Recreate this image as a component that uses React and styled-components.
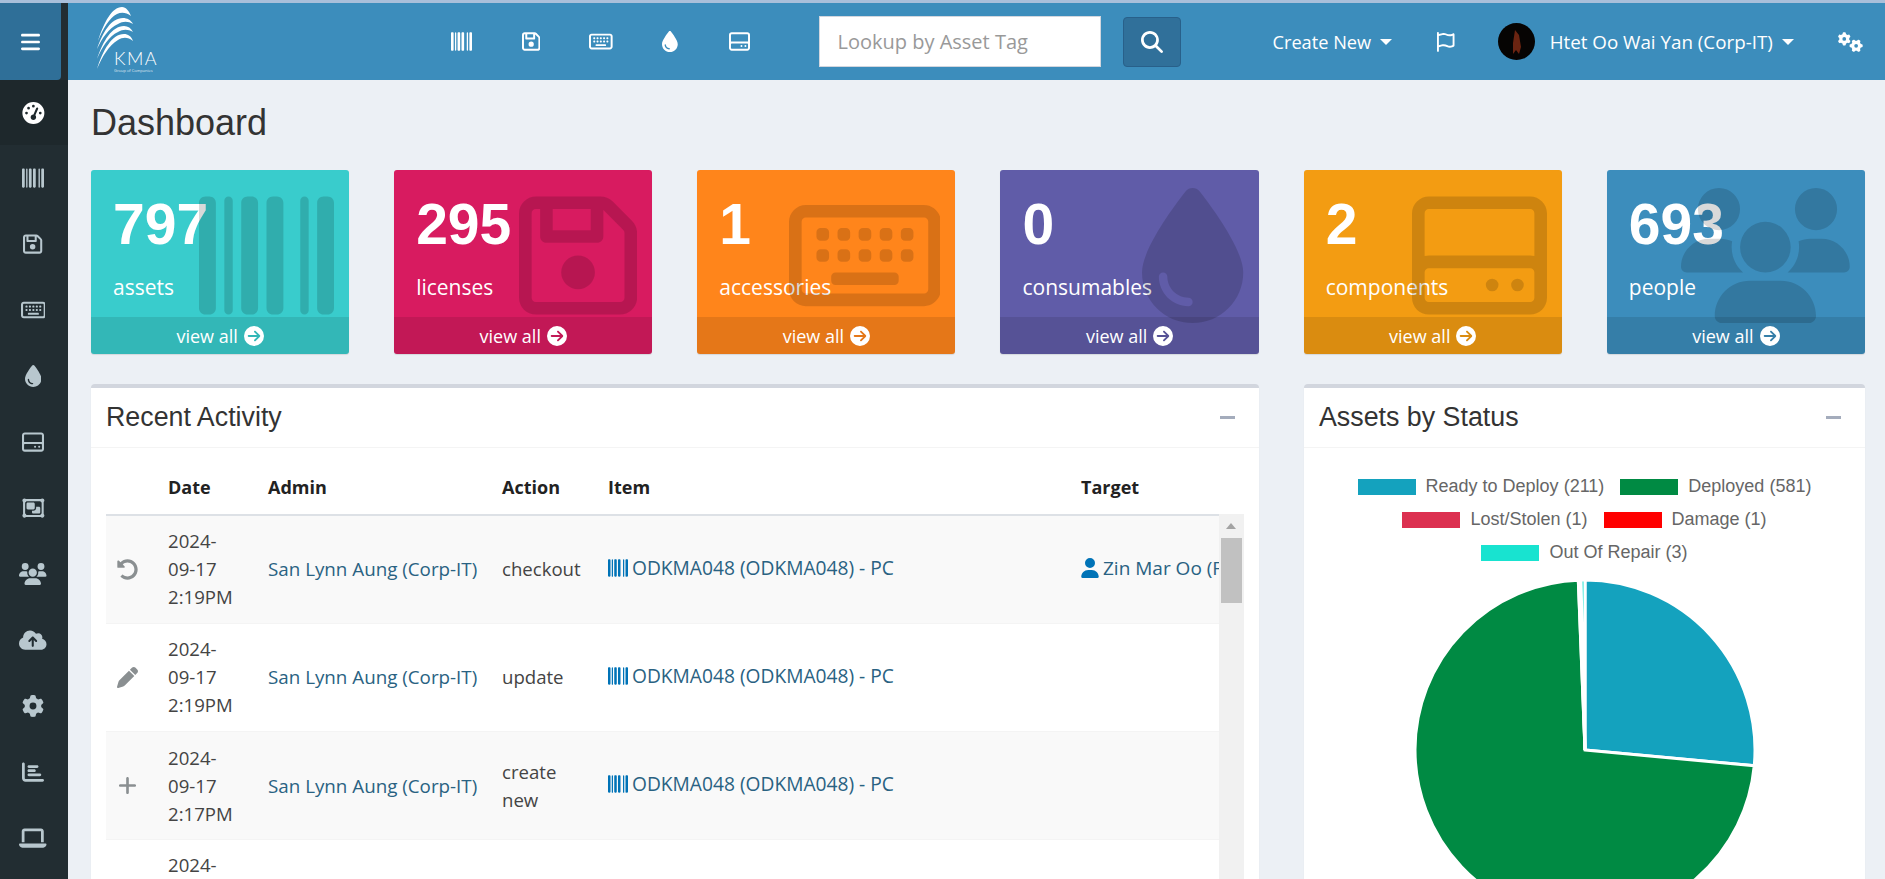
import React from 'react'
import styled, { createGlobalStyle } from 'styled-components'
import { FaUndoAlt } from 'react-icons/fa'
import {
  FaBars, FaBarcode, FaRegFloppyDisk, FaRegKeyboard, FaDroplet, FaRegHardDrive, FaGaugeHigh,
  FaRegObjectGroup, FaUsers, FaCloudArrowUp, FaGear, FaChartBar, FaLaptop, FaMagnifyingGlass,
  FaRegFlag, FaGears, FaCircleArrowRight, FaPen, FaPlus, FaUser,
} from 'react-icons/fa6'

const GlobalStyle = createGlobalStyle`
  html, body { margin: 0; padding: 0; height: 100%; overflow: hidden; }
  body { background: #ecf0f5; font-family: "Open Sans", "Noto Sans", sans-serif; color: #444; }
  * { box-sizing: border-box; }
`

const Page = styled.div`
  height: 879px;
  overflow: hidden;
`

const TopStrip = styled.div`
  height: 3px;
  background: #a9bfda;
`

const Shell = styled.div`
  display: flex;
`

const Sidebar = styled.aside`
  width: 68px;
  flex: none;
  height: 876px;
  background: #222d32;
`

const Toggle = styled.div`
  width: 61px;
  height: 77px;
  background: #2f6f98;
  border-radius: 0 0 4px 0;
  color: #fff;
  display: flex;
  align-items: center;
  justify-content: center;
  svg { height: 22px; width: 19px; display: block; }
`

const SideItem = styled.div`
  height: ${({ $active }) => ($active ? 65 : 66)}px;
  background: ${({ $active }) => ($active ? '#1e282c' : 'transparent')};
  color: ${({ $active }) => ($active ? '#fff' : '#b8c7ce')};
  display: flex;
  align-items: center;
  justify-content: center;
  padding-right: 2px;
  svg { height: 22px; width: ${({ $ratio }) => $ratio * 22}px; display: block; }
`

const Main = styled.main`
  flex: 1;
  min-width: 0;
`

const Header = styled.header`
  height: 77px;
  background: #3c8dbc;
  display: flex;
  align-items: center;
  color: #fff;
`

const Logo = styled.div`
  width: 64px;
  height: 70px;
  margin: 0 0 0 28px;
  position: relative;
  flex: none;
  align-self: flex-start;
  svg { display: block; }
`

const LogoName = styled.div`
  position: absolute;
  left: 18px;
  top: 46px;
  font-family: "Lato", sans-serif;
  font-weight: 300;
  font-size: 18px;
  letter-spacing: 1.5px;
  line-height: 18px;
`

const LogoTag = styled.div`
  position: absolute;
  left: 18px;
  top: 64.5px;
  font-size: 4px;
  line-height: 5px;
  white-space: nowrap;
  opacity: .8;
`

const NavIcons = styled.nav`
  display: flex;
  margin-left: 267px;
`

const NavIcon = styled.div`
  width: 69.5px;
  display: flex;
  justify-content: center;
  svg { height: 21px; width: ${({ $ratio }) => $ratio * 21}px; display: block; }
`

const SearchInput = styled.input`
  width: 282px;
  height: 51px;
  margin-left: 44px;
  padding: 0 18px;
  border: 1px solid #d2d6de;
  background: #fff;
  font: 20px "Open Sans", sans-serif;
  outline: none;
  &::placeholder { color: #999; opacity: 1; }
`

const SearchButton = styled.button`
  width: 58px;
  height: 50px;
  margin-left: 22px;
  border: 1px solid #28608a;
  border-radius: 4px;
  background: #30709a;
  color: #fff;
  display: flex;
  align-items: center;
  justify-content: center;
  svg { height: 22px; width: 22px; display: block; }
`

const HeaderLink = styled.div`
  display: flex;
  align-items: center;
  font-size: ${({ $size }) => $size}px;
  white-space: nowrap;
  margin-left: ${({ $gap }) => $gap}px;
`

const Caret = styled.span`
  width: 0;
  height: 0;
  margin-left: 9px;
  border-left: 6px solid transparent;
  border-right: 6px solid transparent;
  border-top: 6px solid #fff;
`

const HeaderIcon = styled.div`
  margin-left: ${({ $gap }) => $gap}px;
  svg { height: 20px; width: ${({ $ratio }) => $ratio * 20}px; display: block; }
`

const Avatar = styled.svg`
  width: 37px;
  height: 37px;
  margin-left: 43px;
  flex: none;
  display: block;
`

const Content = styled.div`
  padding: 0 20px 0 23px;
`

const Title = styled.h1`
  margin: 0;
  height: 90px;
  font: 400 36px/86px "Liberation Sans", Arial, sans-serif;
  color: #333;
`

const Cards = styled.div`
  display: grid;
  grid-template-columns: repeat(6, 1fr);
  column-gap: 45px;
`

const Card = styled.div`
  position: relative;
  height: 184px;
  border-radius: 3px;
  overflow: hidden;
  background: ${({ $color }) => $color};
  box-shadow: 0 1px 1px rgba(0, 0, 0, .1);
  color: #fff;
  display: flex;
  flex-direction: column;
`

const CardBody = styled.div`
  flex: 1;
  padding: 0 22px;
`

const Count = styled.div`
  font: 700 57px/56px "Liberation Sans", Arial, sans-serif;
  margin-top: 26px;
`

const CardLabel = styled.div`
  font-size: 21px;
  line-height: 28px;
  margin-top: 21px;
`

const CardFooter = styled.div`
  height: 37px;
  background: rgba(0, 0, 0, .1);
  display: flex;
  align-items: center;
  justify-content: center;
  gap: 6px;
  font-size: 18px;
  svg { height: 20px; width: 20px; display: block; }
`

const CardIcon = styled.div`
  position: absolute;
  top: 18px;
  right: 15px;
  color: rgba(0, 0, 0, .15);
  svg { height: 135px; width: ${({ $ratio }) => $ratio * 135}px; display: block; }
`

const Panels = styled.div`
  display: grid;
  grid-template-columns: 1168px 561px;
  column-gap: 45px;
  margin-top: 30px;
`

const Panel = styled.section`
  height: 520px;
  background: #fff;
  border-top: 4px solid #d2d6de;
  border-radius: 4px 4px 0 0;
  box-shadow: 0 1px 1px rgba(0, 0, 0, .1);
`

const PanelHead = styled.div`
  height: 60px;
  padding: 0 15px 1px;
  border-bottom: 1px solid #f4f4f4;
  display: flex;
  align-items: center;
  justify-content: space-between;
`

const PanelTitle = styled.h3`
  margin: 0;
  font: 400 26.8px/1 "Liberation Sans", Arial, sans-serif;
  color: #333;
`

const Collapse = styled.span`
  width: 15px;
  height: 3px;
  margin-right: 9px;
  background: #a4acbc;
`

const TableArea = styled.div`
  display: flex;
  padding: 15px 15px 0;
`

const Table = styled.table`
  width: 1113px;
  flex: none;
  table-layout: fixed;
  border-collapse: collapse;
  font-size: 18.6px;
  line-height: 28px;
  color: #444;
  align-self: flex-start;
`

const Head = styled.th`
  width: ${({ $w }) => $w}px;
  height: 52px;
  padding: 0 8px 3px;
  text-align: left;
  font-weight: 700;
  font-size: 18px;
  color: #222;
  border-bottom: 2px solid #dde1e6;
`

const Row = styled.tr`
  height: 108.3px;
  background: ${({ $odd }) => ($odd ? '#f9f9f9' : '#fff')};
  border-bottom: 1px solid #f4f4f4;
`

const Cell = styled.td`
  padding: 11px 8px;
  vertical-align: ${({ $top }) => ($top ? 'top' : 'middle')};
  overflow: hidden;
  white-space: ${({ $nowrap }) => ($nowrap ? 'nowrap' : 'normal')};
`

const ActionIcon = styled.div`
  color: #8a8f91;
  padding-left: 3px;
  svg { height: 21px; width: 21px; display: block; }
`

const DateText = styled.div`
  width: 68px;
`

const ActionText = styled.div`
  width: 84px;
`

const Link = styled.a`
  color: #296282;
  display: inline-flex;
  align-items: center;
  font-size: ${({ $size }) => $size || 19}px;
`

const LinkIcon = styled.span`
  color: #0073b7;
  margin-right: 4px;
  svg { height: 20px; width: ${({ $width }) => $width}px; display: block; }
`

const Scrollbar = styled.div`
  width: 25px;
  height: 400px;
  margin-top: 51px;
  padding-left: 2px;
  background: #f1f1f1;
  flex: none;
`

const ScrollArrow = styled.div`
  width: 0;
  height: 0;
  margin: 9px 0 0 5px;
  border-left: 5px solid transparent;
  border-right: 5px solid transparent;
  border-bottom: 6px solid #a3a3a3;
`

const ScrollThumb = styled.div`
  width: 21px;
  height: 65px;
  margin-top: 9px;
  background: #c1c1c1;
`

const Legend = styled.ul`
  list-style: none;
  width: 520px;
  margin: 22px auto 0;
  padding: 0;
  display: flex;
  flex-wrap: wrap;
  justify-content: center;
  column-gap: 16px;
  font: 18px/33px "Liberation Sans", Arial, sans-serif;
  color: #666;
`

const LegendItem = styled.li`
  display: flex;
  align-items: center;
  gap: 10px;
`

const Swatch = styled.span`
  width: 58px;
  height: 16px;
  background: ${({ $color }) => $color};
`

const Pie = styled.svg`
  display: block;
  margin: 10px auto 0;
`

const navItems = [
  { Icon: FaBarcode, ratio: 1 },
  { Icon: FaRegFloppyDisk, ratio: 0.875 },
  { Icon: FaRegKeyboard, ratio: 1.125 },
  { Icon: FaDroplet, ratio: 0.75 },
  { Icon: FaRegHardDrive, ratio: 1 },
]

const sideItems = [
  ...navItems,
  { Icon: FaRegObjectGroup, ratio: 1.125 },
  { Icon: FaUsers, ratio: 1.25 },
  { Icon: FaCloudArrowUp, ratio: 1.25 },
  { Icon: FaGear, ratio: 1 },
  { Icon: FaChartBar, ratio: 1 },
  { Icon: FaLaptop, ratio: 1.25 },
]

const cards = [
  { count: 797, label: 'assets', color: '#39cccc', Icon: FaBarcode, ratio: 1 },
  { count: 295, label: 'licenses', color: '#d81b60', Icon: FaRegFloppyDisk, ratio: 0.875 },
  { count: 1, label: 'accessories', color: '#ff851b', Icon: FaRegKeyboard, ratio: 1.125 },
  { count: 0, label: 'consumables', color: '#605ca8', Icon: FaDroplet, ratio: 0.75 },
  { count: 2, label: 'components', color: '#f39c12', Icon: FaRegHardDrive, ratio: 1 },
  { count: 693, label: 'people', color: '#3c8dbc', Icon: FaUsers, ratio: 1.25 },
]

const rows = [
  { Icon: FaUndoAlt, time: '2:19PM', action: 'checkout', target: 'Zin Mar Oo (F' },
  { Icon: FaPen, time: '2:19PM', action: 'update' },
  { Icon: FaPlus, time: '2:17PM', action: 'create new' },
]

const statuses = [
  { name: 'Ready to Deploy', value: 211, color: '#14a2be' },
  { name: 'Deployed', value: 581, color: '#008a43' },
  { name: 'Lost/Stolen', value: 1, color: '#dc3050' },
  { name: 'Damage', value: 1, color: '#ff0000' },
  { name: 'Out Of Repair', value: 3, color: '#18e3d0' },
]

const slicePath = (from, to, r, c) => {
  const point = (a) => `${c + r * Math.sin(a)} ${c - r * Math.cos(a)}`
  const large = to - from > Math.PI ? 1 : 0
  return `M${c} ${c}L${point(from)}A${r} ${r} 0 ${large} 1 ${point(to)}Z`
}

const PieChart = () => {
  const total = statuses.reduce((sum, s) => sum + s.value, 0)
  let angle = 0
  return (
    <Pie width="342" height="342" viewBox="0 0 342 342">
      {statuses.map((s) => {
        const from = angle
        angle += (s.value / total) * Math.PI * 2
        return <path key={s.name} d={slicePath(from, angle, 170, 171)} fill={s.color} stroke="#fff" strokeWidth="3" />
      })}
    </Pie>
  )
}

const LogoMark = () => (
  <svg width="40" height="70" viewBox="0 0 40 70" fill="#fff">
    <path d="M2 38C8 19 16 4 26 4C30 4 33 8 35 13C30 9 25 9 21 11C13 15 7 26 2 38Z" />
    <path d="M1 46C7 29 15 15 27 15C31 15 35 17 37 21C32 18 27 18 22 21C13 25 6 35 1 46Z" />
    <path d="M1 56C7 38 16 23 28 23C32 23 35 25 37 29C32 26 27 26 22 29C13 33 6 44 1 56Z" />
    <path d="M1 66C7 47 16 31 28 31C32 31 35 33 37 38C32 34 27 34 22 37C13 42 6 54 1 66Z" />
  </svg>
)

const App = () => (
  <Page>
    <GlobalStyle />
    <TopStrip />
    <Shell>
      <Sidebar>
        <Toggle><FaBars /></Toggle>
        <SideItem $active $ratio={1.125}><FaGaugeHigh /></SideItem>
        {sideItems.map(({ Icon, ratio }, i) => (
          <SideItem key={i} $ratio={ratio}><Icon /></SideItem>
        ))}
      </Sidebar>
      <Main>
        <Header>
          <Logo>
            <LogoMark />
            <LogoName>KMA</LogoName>
            <LogoTag>Group of Companies</LogoTag>
          </Logo>
          <NavIcons>
            {navItems.map(({ Icon, ratio }, i) => (
              <NavIcon key={i} $ratio={ratio}><Icon /></NavIcon>
            ))}
          </NavIcons>
          <SearchInput placeholder="Lookup by Asset Tag" />
          <SearchButton><FaMagnifyingGlass /></SearchButton>
          <HeaderLink $gap={92} $size={18.2}>Create New<Caret /></HeaderLink>
          <HeaderIcon $gap={45} $ratio={0.875}><FaRegFlag /></HeaderIcon>
          <Avatar viewBox="0 0 37 37">
            <circle cx="18.5" cy="18.5" r="18.5" fill="#060403" />
            <path d="M17 7L21 12L23 24L21 31L18 27L15 31L15 20Z" fill="#6b2411" />
          </Avatar>
          <HeaderLink $gap={15} $size={18.8}>Htet Oo Wai Yan (Corp-IT)<Caret /></HeaderLink>
          <HeaderIcon $gap={44} $ratio={1.25}><FaGears /></HeaderIcon>
        </Header>
        <Content>
          <Title>Dashboard</Title>
          <Cards>
            {cards.map(({ count, label, color, Icon, ratio }) => (
              <Card key={label} $color={color}>
                <CardBody>
                  <Count>{count}</Count>
                  <CardLabel>{label}</CardLabel>
                </CardBody>
                <CardFooter>view all <FaCircleArrowRight /></CardFooter>
                <CardIcon $ratio={ratio}><Icon /></CardIcon>
              </Card>
            ))}
          </Cards>
          <Panels>
            <Panel>
              <PanelHead>
                <PanelTitle>Recent Activity</PanelTitle>
                <Collapse />
              </PanelHead>
              <TableArea>
                <Table>
                  <thead>
                    <tr>
                      <Head $w={54} />
                      <Head $w={100}>Date</Head>
                      <Head $w={234}>Admin</Head>
                      <Head $w={106}>Action</Head>
                      <Head $w={473}>Item</Head>
                      <Head $w={146}>Target</Head>
                    </tr>
                  </thead>
                  <tbody>
                    {rows.map(({ Icon, time, action, target }, i) => (
                      <Row key={i} $odd={i % 2 === 0}>
                        <Cell><ActionIcon><Icon /></ActionIcon></Cell>
                        <Cell><DateText>2024-09-17 {time}</DateText></Cell>
                        <Cell><Link $size={18.8}>San Lynn Aung (Corp-IT)</Link></Cell>
                        <Cell><ActionText>{action}</ActionText></Cell>
                        <Cell $nowrap>
                          <Link $size={19.2}>
                            <LinkIcon $width={20}><FaBarcode /></LinkIcon>
                            ODKMA048 (ODKMA048) - PC
                          </Link>
                        </Cell>
                        <Cell $nowrap>
                          {target && (
                            <Link>
                              <LinkIcon $width={18}><FaUser /></LinkIcon>
                              {target}
                            </Link>
                          )}
                        </Cell>
                      </Row>
                    ))}
                    <Row>
                      <Cell />
                      <Cell $top><DateText>2024-</DateText></Cell>
                    </Row>
                  </tbody>
                </Table>
                <Scrollbar>
                  <ScrollArrow />
                  <ScrollThumb />
                </Scrollbar>
              </TableArea>
            </Panel>
            <Panel>
              <PanelHead>
                <PanelTitle>Assets by Status</PanelTitle>
                <Collapse />
              </PanelHead>
              <Legend>
                {statuses.map((s) => (
                  <LegendItem key={s.name}>
                    <Swatch $color={s.color} />
                    {s.name} ({s.value})
                  </LegendItem>
                ))}
              </Legend>
              <PieChart />
            </Panel>
          </Panels>
        </Content>
      </Main>
    </Shell>
  </Page>
)

export default App
